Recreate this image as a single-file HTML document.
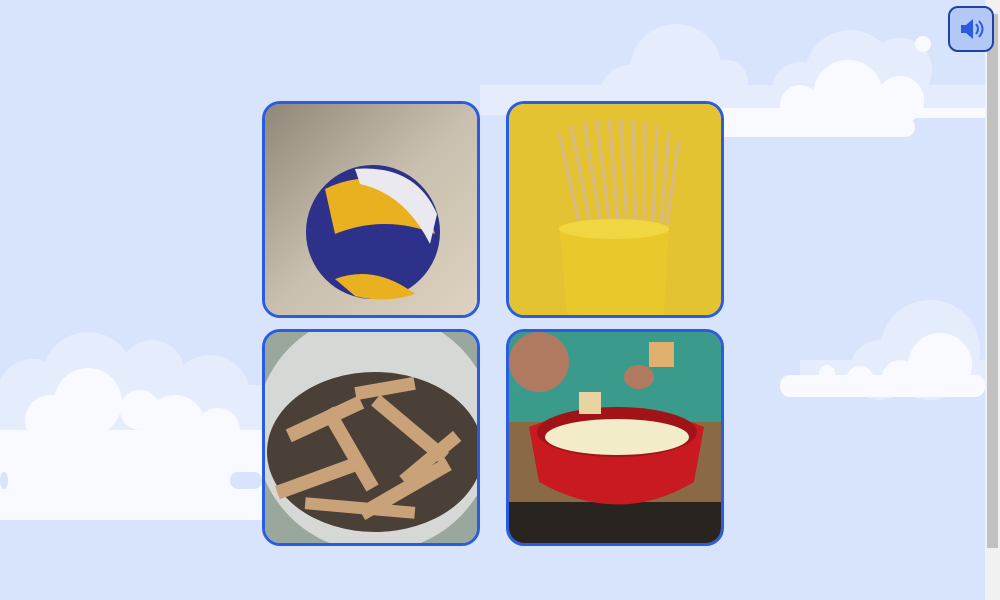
<!DOCTYPE html>
<html><head><meta charset="utf-8"><style>
html,body{margin:0;padding:0;width:1000px;height:600px;overflow:hidden;background:#d8e3fc;font-family:"Liberation Sans",sans-serif}
.sb{position:absolute;right:0;top:0;width:15px;height:600px;background:#f1f1f1}
.sb .th{position:absolute;left:2px;top:14px;width:11px;height:534px;background:#c1c1c1}
.btn{position:absolute;left:948px;top:6px;width:42px;height:42px;border:2px solid #1d43a8;border-radius:10px;background:#b4c8f6;z-index:5}
.card{position:absolute;width:212px;height:211px;border:3px solid #2a5ce0;border-radius:18px;overflow:hidden}
.card svg{display:block}
</style></head><body>
<svg width="1000" height="600" style="position:absolute;left:0;top:0">
<g fill="#e5edfd">
<circle cx="88" cy="378" r="46"/><circle cx="33" cy="395" r="36"/><circle cx="152" cy="372" r="32"/><circle cx="210" cy="395" r="40"/><rect x="0" y="385" width="262" height="80"/>
<circle cx="676" cy="70" r="46"/><circle cx="630" cy="95" r="30"/><circle cx="726" cy="82" r="22"/><circle cx="850" cy="75" r="45"/><circle cx="900" cy="70" r="32"/><circle cx="800" cy="90" r="28"/><rect x="480" y="85" width="505" height="30"/>
<circle cx="930" cy="350" r="50"/><circle cx="880" cy="370" r="30"/><rect x="800" y="360" width="185" height="30"/>
</g>
<g fill="#f8faff">
<circle cx="88" cy="402" r="34"/><circle cx="50" cy="420" r="25"/><circle cx="140" cy="410" r="20"/><circle cx="175" cy="425" r="30"/><circle cx="218" cy="430" r="22"/><rect x="0" y="430" width="262" height="90"/>
<circle cx="848" cy="95" r="35"/><circle cx="800" cy="105" r="20"/><circle cx="900" cy="100" r="24"/><rect x="700" y="108" width="285" height="10"/><rect x="700" y="117" width="215" height="20" rx="10"/>
<circle cx="940" cy="365" r="32"/><circle cx="900" cy="378" r="18"/><circle cx="860" cy="380" r="14"/><rect x="780" y="375" width="205" height="22" rx="10"/>
<circle cx="923" cy="44" r="8"/><circle cx="827" cy="373" r="8"/>
</g>
<rect x="0" y="472" width="8" height="17" rx="8" fill="#d8e3fc"/><rect x="230" y="472" width="32" height="17" rx="8" fill="#d8e3fc"/>
</svg>
<div class="card" style="left:262px;top:101px"><svg width="212" height="211">
<defs><linearGradient id="s" x1="0" y1="0" x2="1" y2="1"><stop offset="0" stop-color="#8f8778"/><stop offset=".5" stop-color="#c9bfae"/><stop offset="1" stop-color="#ddd2bf"/></linearGradient></defs>
<rect width="212" height="211" fill="url(#s)"/>
<circle cx="108" cy="128" r="67" fill="#2d3189"/>
<path d="M60 85 Q110 60 160 95 L170 130 Q120 110 70 130 Z" fill="#e9b020"/>
<path d="M90 65 Q150 60 172 110 L165 140 Q140 90 95 80 Z" fill="#e9e9ef"/>
<path d="M70 175 Q110 160 150 190 Q120 200 90 192 Z" fill="#e9b020"/>
</svg></div>
<div class="card" style="left:506px;top:101px"><svg width="212" height="211">
<rect width="212" height="211" fill="#e3c331"/>
<g stroke="#d9b98a" stroke-width="3">
<line x1="50" y1="30" x2="75" y2="140"/><line x1="62" y1="22" x2="85" y2="140"/><line x1="75" y1="18" x2="95" y2="140"/><line x1="88" y1="16" x2="103" y2="140"/><line x1="100" y1="15" x2="111" y2="140"/><line x1="112" y1="15" x2="119" y2="140"/><line x1="124" y1="16" x2="127" y2="140"/><line x1="136" y1="18" x2="135" y2="140"/><line x1="148" y1="22" x2="143" y2="140"/><line x1="160" y1="28" x2="150" y2="140"/><line x1="170" y1="35" x2="155" y2="140"/>
</g>
<path d="M50 120 Q105 150 160 120 L155 211 L58 211 Z" fill="#e8c82a"/>
<ellipse cx="105" cy="125" rx="55" ry="10" fill="#f0d640"/>
</svg></div>
<div class="card" style="left:262px;top:329px"><svg width="212" height="211">
<rect width="212" height="211" fill="#9aa79c"/>
<ellipse cx="110" cy="100" rx="120" ry="120" fill="#d6d8d5"/>
<ellipse cx="110" cy="120" rx="108" ry="80" fill="#4a4038"/>
<g fill="#c9a27a">
<rect x="20" y="80" width="80" height="14" transform="rotate(-25 60 87)"/><rect x="90" y="50" width="60" height="13" transform="rotate(-10 120 56)"/><rect x="40" y="110" width="90" height="14" transform="rotate(60 85 117)"/><rect x="100" y="90" width="90" height="14" transform="rotate(40 145 97)"/><rect x="10" y="140" width="80" height="14" transform="rotate(-20 50 147)"/><rect x="90" y="150" width="100" height="14" transform="rotate(-30 140 157)"/><rect x="40" y="170" width="110" height="12" transform="rotate(5 95 176)"/><rect x="130" y="120" width="70" height="13" transform="rotate(-40 165 126)"/>
</g>
</svg></div>
<div class="card" style="left:506px;top:329px"><svg width="212" height="211">
<rect width="212" height="211" fill="#8a6a45"/>
<rect width="212" height="90" fill="#3a9a8c"/>
<ellipse cx="30" cy="30" rx="30" ry="30" fill="#b07a60"/>
<ellipse cx="130" cy="45" rx="15" ry="12" fill="#b07a60"/>
<rect x="0" y="170" width="212" height="41" fill="#2a2420"/>
<path d="M20 95 Q110 60 195 95 L185 150 Q110 195 30 150 Z" fill="#c81a20"/>
<ellipse cx="108" cy="100" rx="80" ry="25" fill="#a01418"/>
<ellipse cx="108" cy="105" rx="72" ry="18" fill="#f3ecc8"/>
<rect x="140" y="10" width="25" height="25" fill="#e0b070"/>
<rect x="70" y="60" width="22" height="22" fill="#e8d4a0"/>
</svg></div>
<div class="sb"><div class="th"></div></div>
<div class="btn"><svg width="42" height="42"><path d="M11 17h5l7-6v20l-7-6h-5z" fill="#2a5ce0"/><path d="M26 16q4 5 0 10M29 13q7 8 0 16" stroke="#2a5ce0" stroke-width="2" fill="none"/></svg></div>
</body></html>
